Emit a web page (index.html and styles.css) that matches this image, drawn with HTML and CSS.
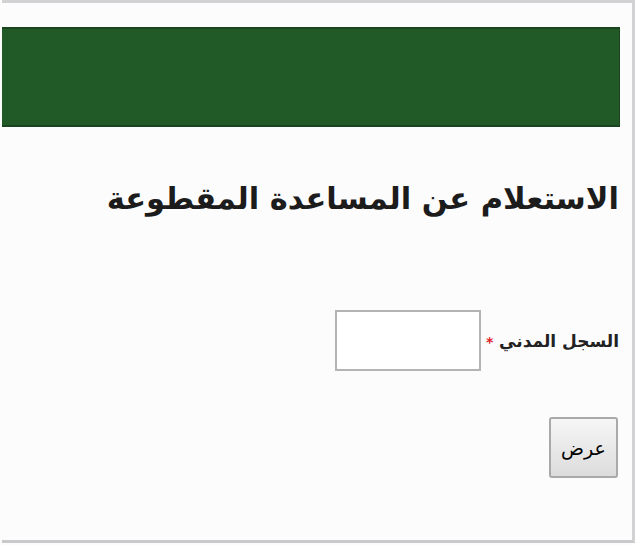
FILE: index.html
```html
<!DOCTYPE html>
<html lang="ar" dir="rtl">
<head>
<meta charset="utf-8">
<link rel="stylesheet" href="styles.css">
</head>
<body>
<div class="frame">
  <div class="banner"></div>
  <h1 class="title">الاستعلام عن المساعدة المقطوعة</h1>
  <div class="row">
    <label class="label">السجل المدني <span class="req">*</span></label>
    <input class="field" type="text">
  </div>
  <div class="actions">
    <button class="btn" type="button">عرض</button>
  </div>
</div>
</body>
</html>
```

FILE: styles.css
```css
html, body {
  margin: 0;
  padding: 0;
  background: #fdfcfd;
}
body {
  font-family: "DejaVu Sans", sans-serif;
  color: #1a1a1a;
}
.frame {
  box-sizing: border-box;
  width: 633px;
  height: 543px;
  border-top: 3px solid #d2d2d4;
  border-right: 3px solid #d2d2d4;
  border-bottom: 3px solid #c9c9cc;
  padding: 24px 12px 0 0;
}
.banner {
  height: 96px;
  background: #215927;
  border-top: 2px solid #1b4420;
  border-bottom: 2px solid #1b4420;
  border-right: 1px solid #1b4420;
}
.title {
  margin: 42px 1px 0 0;
  font-size: 30.5px;
  font-weight: bold;
  line-height: 60px;
  text-align: right;
  color: #1c1c1c;
}
.row {
  display: flex;
  align-items: center;
  gap: 5px;
  margin-top: 81px;
  margin-right: 1px;
}
.label {
  font-size: 17px;
  font-weight: bold;
  color: #222;
}
.req {
  color: #e0202a;
  font-size: 14px;
}
.field {
  box-sizing: border-box;
  width: 146px;
  height: 61px;
  border: 2px solid #b4b4b4;
  background: #fff;
  margin: 0;
  padding: 0;
}
.actions {
  margin-top: 46px;
  margin-right: 2px;
}
.btn {
  box-sizing: border-box;
  width: 69px;
  height: 61px;
  font-family: "DejaVu Sans", sans-serif;
  font-size: 19px;
  color: #000;
  border: 2px solid #a9a9a9;
  border-radius: 3px;
  background: linear-gradient(#f6f6f6, #dcdcdc);
  padding: 0;
}
```
